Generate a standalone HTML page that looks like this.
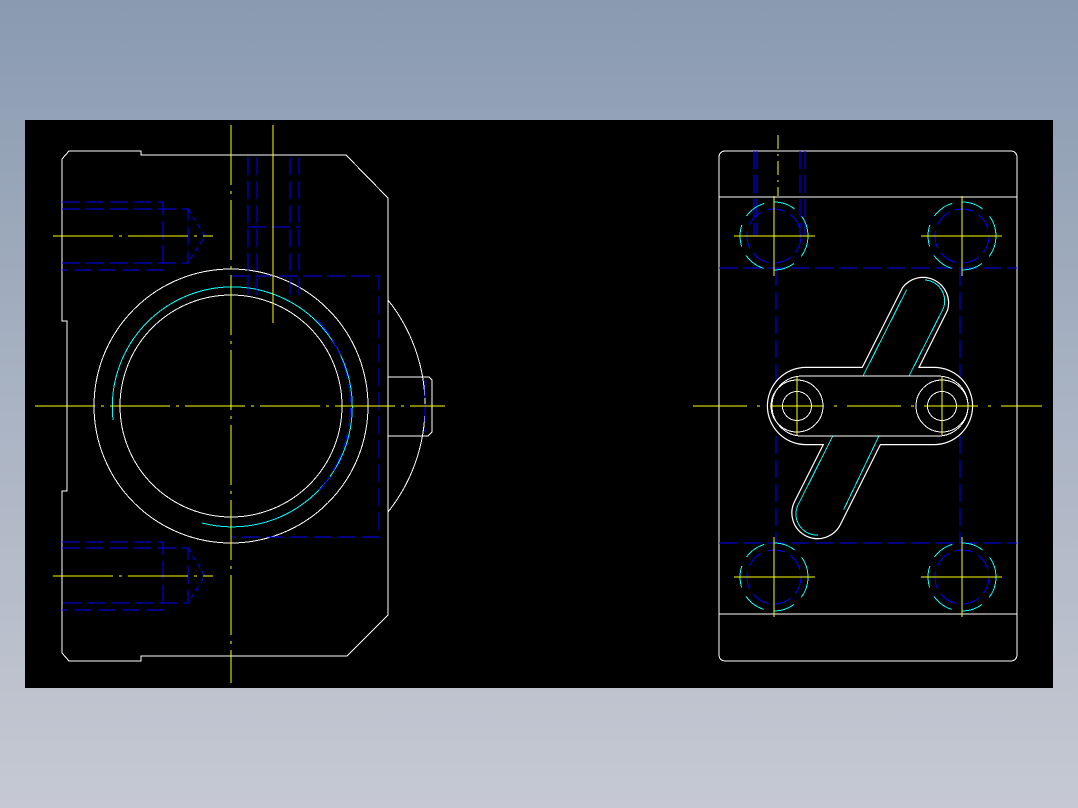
<!DOCTYPE html>
<html><head><meta charset="utf-8"><style>
html,body{margin:0;padding:0}
body{width:1078px;height:808px;background:linear-gradient(#8a9ab0,#a9b3c3 50%,#c6c9d3);position:relative;overflow:hidden}
svg{position:absolute;left:0;top:0}
</style></head><body>
<svg width="1078" height="808" viewBox="0 0 1078 808" fill="none" stroke-width="1" shape-rendering="crispEdges">
<rect x="25" y="120" width="1028" height="568" fill="#000"/>
<!-- LEFT VIEW -->
<g stroke="#fff">
<path d="M62,159 L69,151 L141,151 L141,155 L346,155 L388,198 L388,615 L347,656 L141,656 L141,661 L69,661 L62,653 L62,491 L67,491 L67,321 L62,321 Z"/>
<circle cx="231" cy="406" r="137"/>
<circle cx="231" cy="406" r="111"/>
<path d="M388,300 A170,170 0 0 1 388,512"/>
<path d="M388,377 L429,377 L432,380 L432,432 L428,436 L388,436"/>
</g>
<path d="M113,420 A120,120 0 1 1 202,523" stroke="#0ff"/>
<g stroke="#00f" stroke-dasharray="18,6">
<path d="M62,202 H163 V270 H62 M62,209 H188 V263 H62 M62,542 H163 V610 H62 M62,548 H188 V603 H62"/>
<path d="M248,157 V297 M257,157 V297 M290,157 V297 M299,157 V297 M248,227 H299"/>
<path d="M231,276 H379 V537 H231 M425,380 V432"/>
<path d="M318,320 A130,130 0 0 1 318,492" />
</g>
<path d="M188,209 L205,236 L188,263 M188,548 L205,576 L188,603" stroke="#00f" stroke-dasharray="5,4"/>
<g stroke="#ff0" stroke-dasharray="60,6,3,6">
<path d="M35,406 H445 M53,236 H213 M53,576 H213"/>
<path d="M231,125 V683"/>
</g>
<path d="M273,125 V323" stroke="#ff0"/>
<!-- RIGHT VIEW -->
<g stroke="#fff">
<path d="M725,151 H1011 A6,6 0 0 1 1017,157 V655 A6,6 0 0 1 1011,661 H725 A6,6 0 0 1 719,655 V157 A6,6 0 0 1 725,151 Z"/>
<path d="M719,197 H1017 M719,614 H1017"/>
</g>
<g stroke="#00f" stroke-dasharray="18,6">
<path d="M719,268 H1017 M719,543 H1017 M776,268 V543 M960,268 V543"/>
<path d="M754,151 V236 M757,151 V236 M800,151 V236 M805,151 V236"/>
<circle cx="774" cy="236" r="27"/><circle cx="962" cy="236" r="27"/>
<circle cx="774" cy="577" r="27"/><circle cx="962" cy="577" r="27"/>
</g>
<g stroke="#0ff" stroke-dasharray="22,10">
<circle cx="774" cy="236" r="34"/><circle cx="962" cy="236" r="34"/>
<circle cx="774" cy="577" r="34"/><circle cx="962" cy="577" r="34"/>
</g>
<!-- lever union -->
<g stroke="#fff" stroke-width="2.4" shape-rendering="auto">
<path d="M903,288 L795,502 A25,25 0 0 0 840,524 L947,310 A25,25 0 0 0 903,288 Z"/>
<rect x="768" y="368" width="204" height="76" rx="38"/>
</g>
<g fill="#000" shape-rendering="auto">
<path d="M903,288 L795,502 A25,25 0 0 0 840,524 L947,310 A25,25 0 0 0 903,288 Z"/>
<rect x="768" y="368" width="204" height="76" rx="38"/>
</g>
<g stroke="#0ff">
<path d="M906.6,289.8 L863,376 M943.4,308.2 L909,376 M943.4,308.2 A21,21 0 0 0 925,280"/>
<path d="M832.8,436 L798.6,503.8 M878.9,436 L843.6,509.8 M798.6,503.8 A21,21 0 0 0 818,535"/>
</g>
<g stroke="#fff">
<rect x="772" y="376" width="196" height="60" rx="30"/>
<circle cx="797" cy="406" r="26"/><circle cx="797" cy="406" r="14.5"/>
<circle cx="942" cy="406" r="26"/><circle cx="942" cy="406" r="14.5"/>
</g>
<g stroke="#ff0">
<path d="M734,236 H815 M774,196 V276 M921,236 H1002 M962,196 V276"/>
<path d="M734,577 H815 M774,537 V617 M921,577 H1002 M962,537 V617"/>
<path d="M797,377 V435 M942,377 V435"/>
</g>
<path d="M693,406 H1042" stroke="#ff0" stroke-dasharray="54,10,3,10"/>
<path d="M778,135 V196" stroke="#ff0" stroke-dasharray="14,5,2,5"/>
</svg>
</body></html>
